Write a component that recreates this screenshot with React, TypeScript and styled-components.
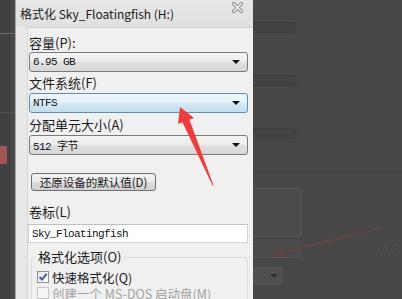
import * as React from 'react'
import styled, { createGlobalStyle, css } from 'styled-components'

const GlobalStyle = createGlobalStyle`
  html, body {
    margin: 0;
    padding: 0;
  }
  body {
    width: 402px;
    height: 299px;
    overflow: hidden;
    background: #474747;
    font-family: "Noto Sans CJK SC", "Liberation Sans", sans-serif;
  }
`

const Screen = styled.div`
  position: relative;
  display: flex;
  width: 402px;
  height: 299px;
  overflow: hidden;
  background: #474747;
`

const LeftStrip = styled.svg`
  flex: none;
  display: block;
`

const BackPage = styled.svg`
  flex: 1;
  display: block;
`

const Dialog = styled.div`
  flex: none;
  width: 238px;
  box-sizing: border-box;
  display: flex;
  flex-direction: column;
  background: #e8e8e8;
  border-left: 1px solid #a3a3a3;
`

const TitleBar = styled.div`
  height: 27px;
  flex: none;
  display: flex;
  align-items: center;
  justify-content: space-between;
  padding: 0 10px 0 4px;
  background: linear-gradient(#e6e6e6, #e1e1e1);
`

const Title = styled.div`
  font-size: 12px;
  line-height: 16px;
  color: #1a1a1a;
  white-space: nowrap;
`

const CloseIcon = styled.svg`
  align-self: flex-start;
  margin-top: 2px;
`

const Frame = styled.div`
  flex: 1;
  display: flex;
  padding-left: 11px;
`

const Client = styled.div`
  flex: 1;
  display: flex;
  flex-direction: column;
  padding: 7px 5px 0 1px;
  background: #f0f0f0;
  border-left: 1px solid #d6d6d6;
  border-top: 1px solid #cfcfcf;
`

const Label = styled.div<{ $top?: number }>`
  height: 16px;
  line-height: 16px;
  font-size: 13px;
  color: #1b1b1b;
  white-space: nowrap;
  margin-top: ${(p) => p.$top ?? 0}px;
`

const Combo = styled.div<{ $top?: number; $hover?: boolean }>`
  height: 20px;
  box-sizing: border-box;
  margin-top: ${(p) => p.$top ?? 1}px;
  display: flex;
  align-items: center;
  justify-content: space-between;
  padding: 0 7px 0 3px;
  border-radius: 3px;
  border: 1px solid #7a7a7a;
  background: linear-gradient(#f4f4f4 0%, #ececec 50%, #e0e0e0 51%, #d7d7d7 100%);
  ${(p) =>
    p.$hover &&
    css`
      border-color: #5d8fb4;
      background: linear-gradient(#eef6fb 0%, #e2f0f8 50%, #d2e8f4 51%, #c2dfee 100%);
    `}
`

const MonoText = styled.span`
  font-family: "Liberation Mono", "Noto Sans CJK SC", monospace;
  font-size: 11px;
  letter-spacing: -0.6px;
  color: #111;
  white-space: pre;
`

const DropArrow = styled.span`
  width: 0;
  height: 0;
  border-left: 4px solid transparent;
  border-right: 4px solid transparent;
  border-top: 4px solid #111;
`

const Button = styled.div`
  margin: 18px 0 0 2px;
  width: 125px;
  height: 18px;
  box-sizing: border-box;
  border: 1px solid #707070;
  border-radius: 3px;
  background: linear-gradient(#f2f2f2 0%, #ebebeb 50%, #dddddd 51%, #d0d0d0 100%);
  font-size: 11.5px;
  line-height: 16px;
  text-align: center;
  color: #1b1b1b;
  white-space: nowrap;
`

const TextBox = styled.div`
  margin-top: 4px;
  height: 19px;
  box-sizing: border-box;
  display: flex;
  align-items: center;
  padding-left: 3px;
  margin-left: -1px;
  background: #ffffff;
  border: 1px solid #d3d3d3;
  border-top-color: #c2c2c2;
`

const GroupBox = styled.fieldset`
  margin: 6px 0 0 2px;
  padding: 4px 5px 0;
  border: 1px solid #d5dfe5;
  border-radius: 3px;
  min-width: 0;
`

const Legend = styled.legend`
  padding: 0 2px;
  margin-left: -1px;
  font-size: 13px;
  line-height: 16px;
  color: #1b1b1b;
`

const CheckRow = styled.div<{ $disabled?: boolean }>`
  display: flex;
  align-items: center;
  gap: 3px;
  height: 16px;
  font-size: 12.5px;
  line-height: 15px;
  white-space: nowrap;
  color: ${(p) => (p.$disabled ? '#a3a3a3' : '#1b1b1b')};
`

const CheckBox = styled.span<{ $disabled?: boolean }>`
  flex: none;
  width: 12px;
  height: 12px;
  box-sizing: border-box;
  display: flex;
  align-items: center;
  justify-content: center;
  border: 1px solid ${(p) => (p.$disabled ? '#c7c7c7' : '#8e8f8f')};
  background: ${(p) => (p.$disabled ? '#f4f4f4' : 'linear-gradient(135deg, #e4e4e4, #ffffff)')};
`

const ArrowOverlay = styled.svg`
  position: absolute;
  left: 0;
  top: 0;
  pointer-events: none;
`

export default function App() {
  return (
    <>
      <GlobalStyle />
      <Screen>
        <LeftStrip width="15" height="299" viewBox="0 0 15 299">
          <rect width="15" height="299" fill="#414141" />
          <rect x="11" width="4" height="299" fill="#4a4a4a" />
          <rect y="33" width="15" height="1" fill="#6a6a6a" />
          <rect y="112" width="15" height="1" fill="#555" />
          <rect y="146" width="7" height="18" fill="#b85a5a" opacity="0.8" />
        </LeftStrip>

        <Dialog>
          <TitleBar>
            <Title>格式化 Sky_Floatingfish (H:)</Title>
            <CloseIcon width="11" height="11" viewBox="0 0 11 11">
              <path d="M1.5 1.5 L9.5 9.5 M9.5 1.5 L1.5 9.5" stroke="#8c8c8c" strokeWidth="3.6" strokeLinecap="round" />
              <path d="M1.5 1.5 L9.5 9.5 M9.5 1.5 L1.5 9.5" stroke="#f4f4f4" strokeWidth="1.6" strokeLinecap="round" />
            </CloseIcon>
          </TitleBar>
          <Frame>
            <Client>
              <Label>容量(P):</Label>
              <Combo>
                <MonoText>6.95 GB</MonoText>
                <DropArrow />
              </Combo>

              <Label $top={3}>文件系统(F)</Label>
              <Combo $top={2} $hover>
                <MonoText>NTFS</MonoText>
                <DropArrow />
              </Combo>

              <Label $top={4}>分配单元大小(A)</Label>
              <Combo $top={2}>
                <MonoText>512 字节</MonoText>
                <DropArrow />
              </Combo>

              <Button>还原设备的默认值(D)</Button>

              <Label $top={13}>卷标(L)</Label>
              <TextBox>
                <MonoText>Sky_Floatingfish</MonoText>
              </TextBox>

              <GroupBox>
                <Legend>格式化选项(O)</Legend>
                <CheckRow>
                  <CheckBox>
                    <svg width="10" height="10" viewBox="0 0 10 10">
                      <path d="M1.6 5 L4 7.6 L8.6 1.8" fill="none" stroke="#3f5a95" strokeWidth="1.9" />
                    </svg>
                  </CheckBox>
                  快速格式化(Q)
                </CheckRow>
                <CheckRow $disabled>
                  <CheckBox $disabled />
                  创建一个 MS-DOS 启动盘(M)
                </CheckRow>
              </GroupBox>
            </Client>
          </Frame>
        </Dialog>

        <BackPage width="149" height="299" viewBox="0 0 149 299">
          <rect width="149" height="299" fill="#474747" />
          <rect x="-4" y="22.5" width="47" height="10" rx="3" fill="#434343" stroke="#3d3d3d" />
          <rect x="-4" y="75.5" width="47" height="10" rx="3" fill="#434343" stroke="#3d3d3d" />
          <rect x="-4" y="128.5" width="47" height="10" rx="3" fill="#434343" stroke="#3d3d3d" />
          <rect y="172" width="149" height="1" fill="#414141" />
          <rect x="-4" y="188.5" width="52" height="48" rx="2" fill="#4a4b4d" stroke="#55585c" />
          <rect x="-4" y="241.5" width="52" height="16" rx="2" fill="#4a4a4a" stroke="#545454" />
          <rect x="-4" y="267.5" width="33" height="17" rx="2" fill="#4f4f4f" stroke="#575757" />
          <path d="M17 274 L25 274 L21 278 Z" fill="#2e2e2e" />
          <path d="M15 257 L30 247 L29 251 L128 227 L127 229 L32 254 L33 257 Z" fill="#5e4545" />
          <text x="127" y="256" fontFamily="Liberation Sans, sans-serif" fontSize="16" fill="#4d4d4d">
            A0
          </text>
        </BackPage>

        <ArrowOverlay width="402" height="299" viewBox="0 0 402 299">
          <polygon points="180,107 194,118 189.5,119.7 213.5,185.5 212.5,185.5 182.5,122.3 178,124" fill="#f23a3a" />
        </ArrowOverlay>
      </Screen>
    </>
  )
}
